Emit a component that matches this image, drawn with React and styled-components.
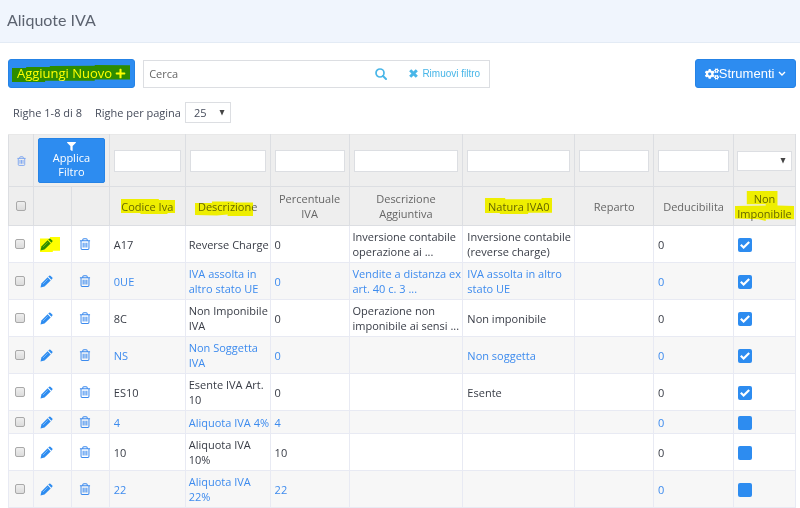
import React from "react";
import styled, { createGlobalStyle, css } from "styled-components";
import { FaPlus, FaCogs, FaFilter } from "react-icons/fa";

const BLUE = "#2d8cf0";
const SKY = "#49b6e8";

const GlobalStyle = createGlobalStyle`
  * { box-sizing: border-box; }
  body {
    margin: 0;
    background: #fff;
    color: #464c5b;
    font: 11px/15px "Open Sans", sans-serif;
  }
  button, input, select { font: inherit; color: inherit; margin: 0; }
  button { cursor: pointer; }
`;

const PageHeader = styled.header`
  display: flex;
  align-items: center;
  height: 43px;
  padding: 0 7px 2px;
  background: #f0f5fd;
  border-bottom: 1px solid #e3ebf5;
`;

const Title = styled.h1`
  margin: 0;
  font: 400 16px/20px Lato, "Open Sans", sans-serif;
  color: #5c6370;
`;

const Content = styled.main`
  padding: 16px 4px 0 8px;
`;

const Toolbar = styled.div`
  display: flex;
  align-items: center;
  gap: 8px;
`;

const PrimaryButton = styled.button`
  display: flex;
  align-items: center;
  justify-content: center;
  height: 29px;
  padding: 0 ${(p) => p.$pad || 8}px;
  border: 1px solid #2583e6;
  border-radius: 3px;
  background: ${BLUE};
  color: #fff;
  font-size: 13px;
  white-space: nowrap;
  ${(p) => p.$plain && css`font-family: "Liberation Sans", Arial, sans-serif;`}
  ${(p) => p.$end && css`margin-left: auto;`}
`;

const FilterButton = styled(PrimaryButton)`
  flex-direction: column;
  width: 100%;
  height: 45px;
  padding: 0;
  border-radius: 2px;
  font-size: 11px;
  line-height: 14px;
  white-space: normal;
`;

const SearchBox = styled.div`
  display: flex;
  align-items: center;
  flex: 0 1 347px;
  height: 28px;
  padding-right: 9px;
  border: 1px solid #dcdee2;
`;

const SearchInput = styled.input`
  flex: 1;
  min-width: 0;
  height: 100%;
  padding: 0 5px;
  border: 0;
  outline: 0;
  background: none;
  &::placeholder { color: #666; opacity: 1; }
`;

const LinkButton = styled.button`
  display: flex;
  align-items: center;
  gap: 4px;
  padding: 0;
  margin-left: ${(p) => p.$space || 0}px;
  border: 0;
  background: none;
  color: ${(p) => p.$color || BLUE};
  font: 10px/14px "Liberation Sans", Arial, sans-serif;
`;

const Paging = styled.div`
  display: flex;
  align-items: center;
  margin: 14px 0 11px;
  padding-left: 5px;
  gap: 13px;
`;

const PageSize = styled.label`
  display: flex;
  align-items: center;
  gap: 4px;
`;

const SelectFrame = styled.span`
  display: grid;
  align-items: center;
  width: ${(p) => p.$width || "100%"};
  height: ${(p) => p.$height}px;
  border: 1px solid #dcdee2;
  background: #fff;
  & > * { grid-area: 1 / 1; }
  & > svg { justify-self: end; margin-right: 5px; pointer-events: none; }
`;

const Select = styled.select`
  appearance: none;
  width: 100%;
  height: 100%;
  padding: 0 8px;
  border: 0;
  background: none;
  font-size: 11px;
`;

const Table = styled.table`
  width: 100%;
  table-layout: fixed;
  border-collapse: collapse;
`;

const HeadRow = styled.tr`
  height: ${(p) => p.$height}px;
  background: #eee;
`;

const HeadCell = styled.th`
  padding: 0 ${(p) => p.$pad ?? 4}px;
  border: 1px solid #dcdee2;
  border-top-color: ${(p) => (p.$top ? "#e8e8e8" : "#dcdee2")};
  color: #666;
  font-weight: 400;
  text-align: center;
  vertical-align: middle;
`;

const FilterInput = styled.input`
  display: block;
  width: 100%;
  height: 22px;
  padding: 0 4px;
  border: 1px solid #dcdee2;
  background: #fff;
`;

const BodyRow = styled.tr`
  height: 23px;
  color: #383c46;
  &:nth-child(even) { background: #f7f7f7; color: #3d8bee; }
`;

const Cell = styled.td`
  padding: 3px 0 3px ${(p) => (p.$tight ? 3 : 4)}px;
  border: 1px solid #e8eaf3;
  vertical-align: middle;
`;

const IconCell = styled(Cell)`
  padding: 0 0 0 ${(p) => p.$left || 6}px;
`;

const TickBox = styled.input`
  appearance: none;
  display: block;
  width: 10px;
  height: 10px;
  border: 1px solid #a9a9a9;
  border-radius: 2px;
  background: linear-gradient(#eee, #dcdcdc);
`;

const HeadTick = styled(TickBox)`
  margin: 0 auto;
`;

const StatusFrame = styled.span`
  display: grid;
  place-items: center;
  width: 14px;
  height: 14px;
  margin-top: 2px;
  & > * { grid-area: 1 / 1; }
  & > svg { pointer-events: none; z-index: 1; display: none; }
  & > input:checked + svg { display: block; }
`;

const StatusInput = styled.input`
  appearance: none;
  width: 14px;
  height: 14px;
  border-radius: 2px;
  background: ${BLUE};
`;

const Marked = styled.span`
  position: relative;
  display: ${(p) => (p.$row ? "inline-flex" : "inline-block")};
  align-items: center;
  gap: 3px;
`;

const InkLayer = styled.span`
  position: absolute;
  inset: ${(p) => p.$inset || "0 -2px"};
  mix-blend-mode: multiply;
  pointer-events: none;
  & > svg { display: block; width: 100%; height: 100%; }
`;

function Marker({ children, shape, inset, row }) {
  return (
    <Marked $row={row}>
      {children}
      <InkLayer $inset={inset}>
        <svg viewBox="0 0 100 100" preserveAspectRatio="none" aria-hidden="true">
          <polygon points={shape} fill="#ff0" />
        </svg>
      </InkLayer>
    </Marked>
  );
}

const SHAPES = {
  add: "0,18 12,18 12,12 32,12 32,6 70,5 70,0 100,2 100,86 70,86 70,92 28,92 28,100 0,100",
  codice: "0,0 70,0 70,6 100,6 100,94 86,94 86,100 36,100 36,94 0,94",
  descr: "0,14 28,14 28,4 64,4 64,10 96,10 96,100 54,100 54,90 36,96 0,94",
  natura: "0,0 30,0 30,8 84,8 84,0 100,0 100,92 64,92 64,100 22,100 22,94 0,94",
  non: "20,0 72,0 72,48 100,50 100,94 52,94 52,100 40,94 0,92 0,50 52,48 52,44 20,44",
  pencil: "0,10 50,10 50,0 100,0 100,92 64,92 64,100 0,100",
};

const Arrow = () => (
  <svg width="6" height="6" viewBox="0 0 6 6" fill="#444" aria-hidden="true">
    <path d="M.5 0h5L3 5.500z" />
  </svg>
);

const Trash = ({ size = 12, faded }) => (
  <svg width={size - (faded ? 1 : 0)} height={size} viewBox="0 0 12 13" fill="none" stroke={faded ? "#6f9df0" : "#3d8bee"} strokeWidth="1.1" aria-hidden="true">
    <path d="M0.5 3h11M3.6 3V1.9Q3.6.8 4.7.8h2.6q1.1 0 1.1 1.1V3M1.7 3v8.2q0 1.2 1.2 1.2h6.2q1.2 0 1.2-1.2V3M4 5.2v5M6 5.2v5M8 5.2v5" />
  </svg>
);

const Pencil = () => (
  <svg width="13" height="13" viewBox="0 0 13 13" fill={BLUE} aria-hidden="true">
    <path d="M.5 12.500l.9-4L7.600 2.300l3.100 3.100-6.200 6.200z" />
    <path d="M8.300 1.600l.9-.9q.6-.5 1.200 0l1.900 1.900q.5.6 0 1.200l-.9.9z" />
    <path d="M3 9l4.700-4.700" stroke="#9bc8fa" strokeWidth=".7" />
  </svg>
);

const SearchIcon = () => (
  <svg width="12" height="12" viewBox="0 0 12 12" fill="none" stroke={SKY} aria-hidden="true">
    <circle cx="5" cy="5" r="4" strokeWidth="1.7" />
    <path d="M8 8l3 3" strokeWidth="2" strokeLinecap="round" />
  </svg>
);

const CloseIcon = () => (
  <svg width="9" height="9" viewBox="0 0 9 9" stroke={SKY} strokeWidth="3" aria-hidden="true">
    <path d="M1.2 1.2l6.6 6.6M7.8 1.2L1.2 7.8" />
  </svg>
);

const Chevron = () => (
  <svg width="8" height="6" viewBox="0 0 8 6" fill="none" stroke="#fff" strokeWidth="1.4" aria-hidden="true">
    <path d="M1 1l3 3 3-3" />
  </svg>
);

const Check = () => (
  <svg width="10" height="8" viewBox="0 0 10 8" fill="none" stroke="#fff" strokeWidth="2.2" aria-hidden="true">
    <path d="M.8 3.8l2.8 2.7L9.2 1" />
  </svg>
);

const COLUMNS = [25, 38, 38, 76, 85, 79, 114, 112, 79, 80, 62];
const TOTAL = COLUMNS.reduce((a, b) => a + b, 0);

const Col = styled.col`
  width: ${(p) => (p.$share * 100) / TOTAL}%;
`;

const TEXT_COLUMNS = [
  { name: "Codice Iva", shape: SHAPES.codice, inset: "0 -2px 0 0" },
  { name: "Descrizione", shape: SHAPES.descr, inset: "2px 2px -2px -3px" },
  { name: "Percentuale IVA" },
  { name: "Descrizione Aggiuntiva" },
  { name: "Natura IVA0", shape: SHAPES.natura, inset: "-1px -3px 0" },
  { name: "Reparto" },
  { name: "Deducibilita" },
];

const ROWS = [
  ["A17", "Reverse Charge", "0", "Inversione contabile operazione ai ...", "Inversione contabile (reverse charge)", true],
  ["0UE", "IVA assolta in altro stato UE", "0", "Vendite a distanza ex art. 40 c. 3 ...", "IVA assolta in altro stato UE", true],
  ["8C", "Non Imponibile IVA", "0", "Operazione non imponibile ai sensi ...", "Non imponibile", true],
  ["NS", "Non Soggetta IVA", "0", "", "Non soggetta", true],
  ["ES10", "Esente IVA Art. 10", "0", "", "Esente", true],
  ["4", "Aliquota IVA 4%", "4", "", "", false],
  ["10", "Aliquota IVA 10%", "10", "", "", false],
  ["22", "Aliquota IVA 22%", "22", "", "", false],
];

function RateRow({ row, marked }) {
  const [code, description, percent, extra, nature, exempt] = row;
  return (
    <BodyRow>
      <IconCell><TickBox type="checkbox" aria-label={`Seleziona ${code}`} /></IconCell>
      <IconCell>
        <LinkButton aria-label={`Modifica ${code}`}>
          {marked ? <Marker row shape={SHAPES.pencil} inset="-1px -7px -1px 0"><Pencil /></Marker> : <Pencil />}
        </LinkButton>
      </IconCell>
      <IconCell $left={7}>
        <LinkButton aria-label={`Elimina ${code}`}><Trash /></LinkButton>
      </IconCell>
      <Cell>{code}</Cell>
      <Cell $tight>{description}</Cell>
      <Cell>{percent}</Cell>
      <Cell $tight>{extra}</Cell>
      <Cell>{nature}</Cell>
      <Cell />
      <Cell>0</Cell>
      <IconCell $left={4}>
        <StatusFrame>
          <StatusInput type="checkbox" defaultChecked={exempt} aria-label={`Non imponibile ${code}`} />
          <Check />
        </StatusFrame>
      </IconCell>
    </BodyRow>
  );
}

export default function App() {
  return (
    <>
      <GlobalStyle />
      <PageHeader><Title>Aliquote IVA</Title></PageHeader>
      <Content>
        <Toolbar>
          <PrimaryButton>
            <Marker row shape={SHAPES.add} inset="-1px -4px -1px -5px">
              Aggiungi Nuovo <FaPlus size={11} />
            </Marker>
          </PrimaryButton>
          <SearchBox role="search">
            <SearchInput type="text" placeholder="Cerca" aria-label="Cerca" />
            <LinkButton aria-label="Avvia ricerca"><SearchIcon /></LinkButton>
            <LinkButton $color={SKY} $space={22}><CloseIcon />Rimuovi filtro</LinkButton>
          </SearchBox>
          <PrimaryButton $plain $end $pad={9}>
            <FaCogs size={14} />Strumenti&nbsp;<Chevron />
          </PrimaryButton>
        </Toolbar>
        <Paging>
          <span>Righe 1-8 di 8</span>
          <PageSize>
            Righe per pagina
            <SelectFrame $width="46px" $height={21}>
              <Select defaultValue="25"><option>25</option><option>50</option></Select>
              <Arrow />
            </SelectFrame>
          </PageSize>
        </Paging>
        <Table>
          <colgroup>{COLUMNS.map((w, i) => <Col key={i} $share={w} />)}</colgroup>
          <thead>
            <HeadRow $height={52}>
              <HeadCell $top>
                <LinkButton aria-label="Elimina selezionati" $space={4}><Trash size={10} faded /></LinkButton>
              </HeadCell>
              <HeadCell $top colSpan={2}>
                <FilterButton><FaFilter size={9} />Applica<br />Filtro</FilterButton>
              </HeadCell>
              {TEXT_COLUMNS.map((c) => (
                <HeadCell $top key={c.name}><FilterInput type="text" aria-label={`Filtra ${c.name}`} /></HeadCell>
              ))}
              <HeadCell $top $pad={3}>
                <SelectFrame $height={20}>
                  <Select aria-label="Filtra Non Imponibile" defaultValue=""><option value="" /><option>Si</option><option>No</option></Select>
                  <Arrow />
                </SelectFrame>
              </HeadCell>
            </HeadRow>
            <HeadRow $height={39}>
              <HeadCell><HeadTick type="checkbox" aria-label="Seleziona tutto" /></HeadCell>
              <HeadCell />
              <HeadCell />
              {TEXT_COLUMNS.map((c) => (
                <HeadCell key={c.name} scope="col">
                  {c.shape ? <Marker shape={c.shape} inset={c.inset}>{c.name}</Marker> : c.name}
                </HeadCell>
              ))}
              <HeadCell scope="col" $pad={2}>
                <Marker shape={SHAPES.non} inset="0 -1px">Non Imponibile</Marker>
              </HeadCell>
            </HeadRow>
          </thead>
          <tbody>
            {ROWS.map((row, i) => <RateRow key={row[0]} row={row} marked={i === 0} />)}
          </tbody>
        </Table>
      </Content>
    </>
  );
}
